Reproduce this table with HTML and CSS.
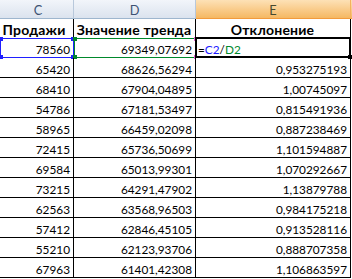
FILE: index.html
```html
<!DOCTYPE html>
<html lang="ru">
<head>
<meta charset="utf-8">
<title>Отклонение</title>
<link rel="stylesheet" href="styles.css">
</head>
<body>
<div class="sheet">
  <div class="hdr hc">C</div>
  <div class="hdr">D</div>
  <div class="hdr sel">E</div>
  <div class="hdr tail"></div>

  <div class="cell th thc r1">Продажи</div>
  <div class="cell th r1">Значение тренда</div>
  <div class="cell th r1">Отклонение</div>
  <div class="cell tail r1"></div>

  <div class="cell num r2 ref">78560
    <span class="frame blue"></span>
    <span class="knob blue tl"></span><span class="knob blue tr"></span>
    <span class="knob blue bl"></span><span class="knob blue br"></span>
  </div>
  <div class="cell num r2 ref">69349,07692
    <span class="frame green"></span>
    <span class="knob green tl"></span><span class="knob green bl"></span>
    <span class="knob pink tr"></span><span class="knob pink br"></span>
  </div>
  <div class="cell r2 active"><span class="eq">=</span><span class="rc">C2</span>/<span class="rd">D2</span>
    <span class="frame black"></span>
    <span class="fill"></span>
  </div>
  <div class="cell tail r2"></div>

  <div class="cell num">65420</div><div class="cell num">68626,56294</div><div class="cell num">0,953275193</div><div class="cell tail"></div>
  <div class="cell num">68410</div><div class="cell num">67904,04895</div><div class="cell num">1,00745097</div><div class="cell tail"></div>
  <div class="cell num">54786</div><div class="cell num">67181,53497</div><div class="cell num">0,815491936</div><div class="cell tail"></div>
  <div class="cell num">58965</div><div class="cell num">66459,02098</div><div class="cell num">0,887238469</div><div class="cell tail"></div>
  <div class="cell num">72415</div><div class="cell num">65736,50699</div><div class="cell num">1,101594887</div><div class="cell tail"></div>
  <div class="cell num">69584</div><div class="cell num">65013,99301</div><div class="cell num">1,070292667</div><div class="cell tail"></div>
  <div class="cell num">73215</div><div class="cell num">64291,47902</div><div class="cell num">1,13879788</div><div class="cell tail"></div>
  <div class="cell num">62563</div><div class="cell num">63568,96503</div><div class="cell num">0,984175218</div><div class="cell tail"></div>
  <div class="cell num">57412</div><div class="cell num">62846,45105</div><div class="cell num">0,913528116</div><div class="cell tail"></div>
  <div class="cell num">55210</div><div class="cell num">62123,93706</div><div class="cell num">0,888707358</div><div class="cell tail"></div>
  <div class="cell num">67963</div><div class="cell num">61401,42308</div><div class="cell num">1,106863597</div><div class="cell tail"></div>
</div>
</body>
</html>
```

FILE: styles.css
```css
html, body {
  margin: 0;
  padding: 0;
  background: #ffffff;
  overflow: hidden;
}

.sheet {
  display: grid;
  grid-template-columns: 74px 122px 155px 1px;
  grid-template-rows: 19px 20px 19px repeat(11, 20px);
  font-family: Lato, "Open Sans", "Noto Sans", sans-serif;
  font-size: 11.8px;
  color: #000;
}

.hdr {
  box-sizing: border-box;
  background: linear-gradient(#f2f5fa, #dbe3ee);
  border-right: 1px solid #b8c8db;
  border-bottom: 1px solid #9eb6ce;
  color: #3d5273;
  display: flex;
  align-items: center;
  justify-content: center;
  font-size: 12.8px;
  padding-top: 1px;
}
.hdr.hc { padding-left: 3px; }
.hdr.sel {
  background: linear-gradient(#fde1b6, #f5b863);
  border-bottom: 1px solid #f29b3c;
  border-right: 1px solid #f4b15e;
  color: #46492f;
}
.hdr.tail {
  background: linear-gradient(#fde1b6, #f5b863);
  border: 0;
  border-bottom: 1px solid #f29b3c;
}

.cell {
  box-sizing: border-box;
  position: relative;
  border-right: 1px solid #000;
  border-bottom: 1px solid #000;
  display: flex;
  align-items: flex-end;
  line-height: 14px;
  padding: 0 3px 0.5px 2px;
  white-space: nowrap;
}
.cell.tail {
  border-right: 0;
  border-bottom: 0;
  padding: 0;
}

.num { justify-content: flex-end; }

.th {
  font-weight: bold;
  font-size: 14px;
  letter-spacing: 0.2px;
  justify-content: center;
  padding-bottom: 1px;
}
.th.thc { padding-right: 5px; padding-left: 0; }

.eq, .active { color: #000; }
.rc { color: #1a1aff; }
.rd { color: #008a2e; }

.frame {
  position: absolute;
  left: 0;
  top: -1px;
  right: -1px;
  bottom: -1px;
  border: 1px solid;
  pointer-events: none;
}
.frame.blue { border-color: #1f1fff; }
.frame.green { border-color: #00882b; left: 0; }
.frame.black {
  left: -1px;
  top: -2px;
  right: -1px;
  bottom: -1px;
  border: 2px solid #000;
}

.knob {
  position: absolute;
  width: 4px;
  height: 4px;
}
.knob.blue { background: #1f1fff; }
.knob.green { background: #00882b; }
.knob.pink { background: #e060d0; width: 2px; }
.knob.tl { left: -1px; top: -2px; }
.knob.tr { right: -2px; top: -2px; }
.knob.bl { left: -1px; bottom: -2px; }
.knob.br { right: -2px; bottom: -2px; }
.knob.pink.tr, .knob.pink.br { right: -1px; }

.fill {
  position: absolute;
  right: -2px;
  bottom: -2px;
  width: 4px;
  height: 4px;
  background: #000;
}
```
